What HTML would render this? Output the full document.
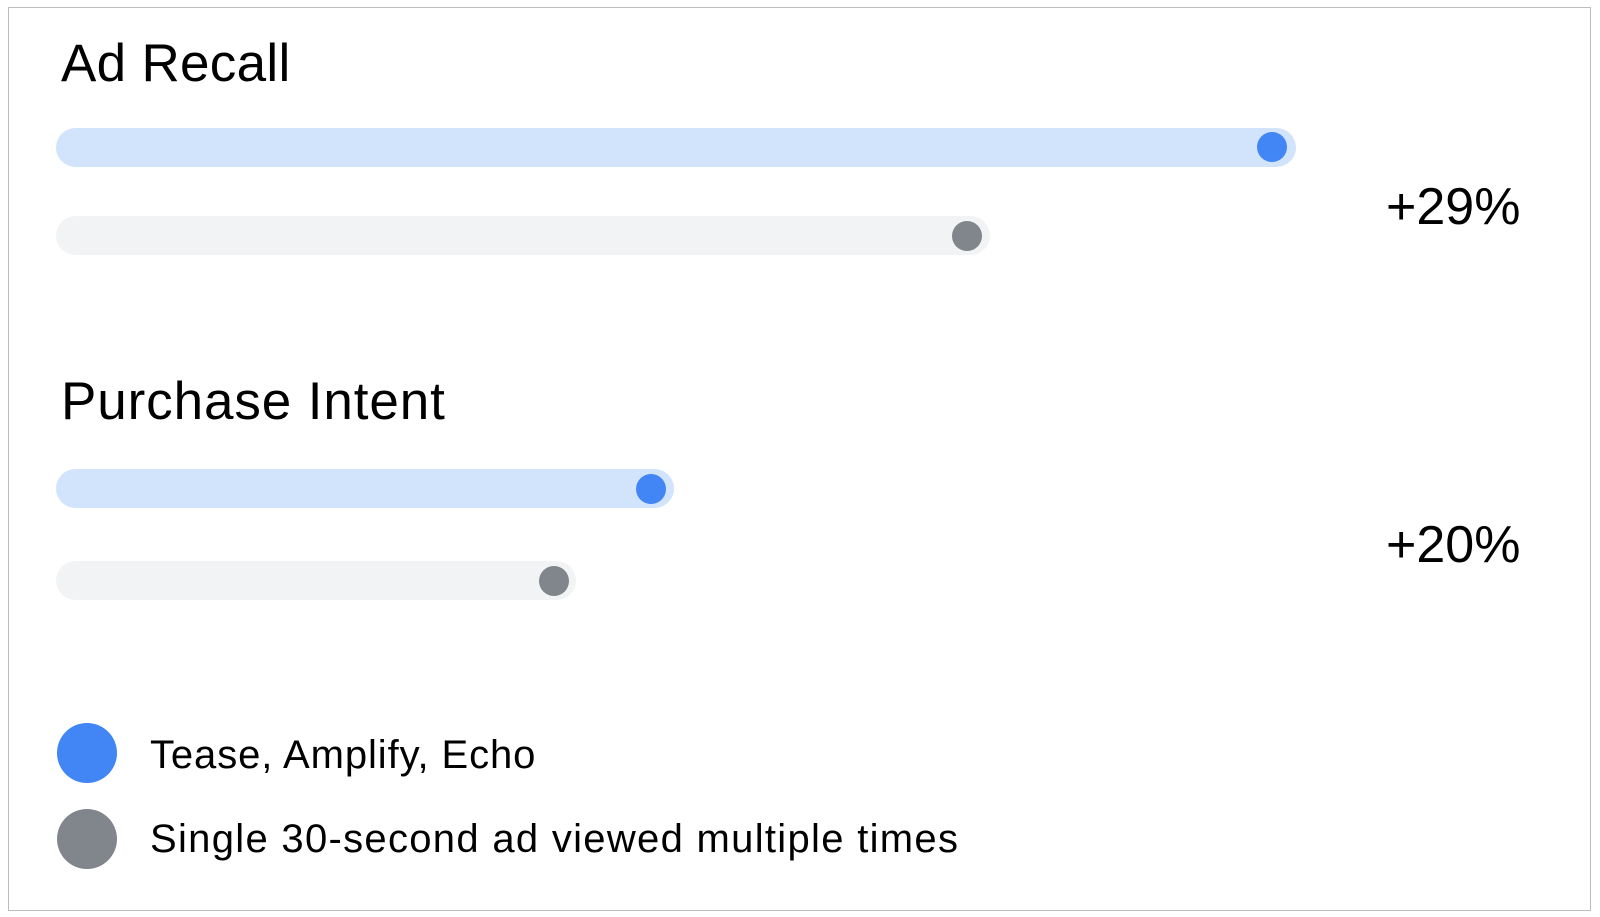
<!DOCTYPE html>
<html><head><style>
body{margin:0;width:1600px;height:917px;background:#fff;font-family:"Liberation Sans",sans-serif;position:relative;overflow:hidden}
.box{position:absolute;left:8px;top:7px;width:1581px;height:902px;border:1px solid #bdbdbd}
.t{position:absolute;color:#000;white-space:nowrap;line-height:1}
.bar{position:absolute;height:39px;border-radius:20px}
.b{background:#d2e3fc}.g{background:#f1f3f4}
.dot{position:absolute;border-radius:50%}
.bd{background:#4285f4}.gd{background:#80868b}
</style></head><body>
<div class="box"></div>
<div class="t" style="left:61px;top:37px;font-size:53px;letter-spacing:0.3px">Ad Recall</div>
<div class="bar b" style="left:56px;top:128px;width:1240px"></div>
<div class="dot bd" style="left:1257px;top:132px;width:30px;height:30px"></div>
<div class="bar g" style="left:56px;top:216px;width:934px"></div>
<div class="dot gd" style="left:952px;top:221px;width:30px;height:30px"></div>
<div class="t" style="left:1386px;top:181px;font-size:52px">+29%</div>

<div class="t" style="left:61px;top:375px;font-size:53px;letter-spacing:0.9px">Purchase Intent</div>
<div class="bar b" style="left:56px;top:469px;width:618px"></div>
<div class="dot bd" style="left:636px;top:474px;width:30px;height:30px"></div>
<div class="bar g" style="left:56px;top:561px;width:520px"></div>
<div class="dot gd" style="left:539px;top:566px;width:30px;height:30px"></div>
<div class="t" style="left:1386px;top:519px;font-size:52px">+20%</div>

<div class="dot bd" style="left:57px;top:723px;width:60px;height:60px"></div>
<div class="t" style="left:150px;top:735px;font-size:40px;letter-spacing:0.9px">Tease, Amplify, Echo</div>
<div class="dot gd" style="left:57px;top:809px;width:60px;height:60px"></div>
<div class="t" style="left:150px;top:819px;font-size:40px;letter-spacing:1.3px">Single 30-second ad viewed multiple times</div>
</body></html>
